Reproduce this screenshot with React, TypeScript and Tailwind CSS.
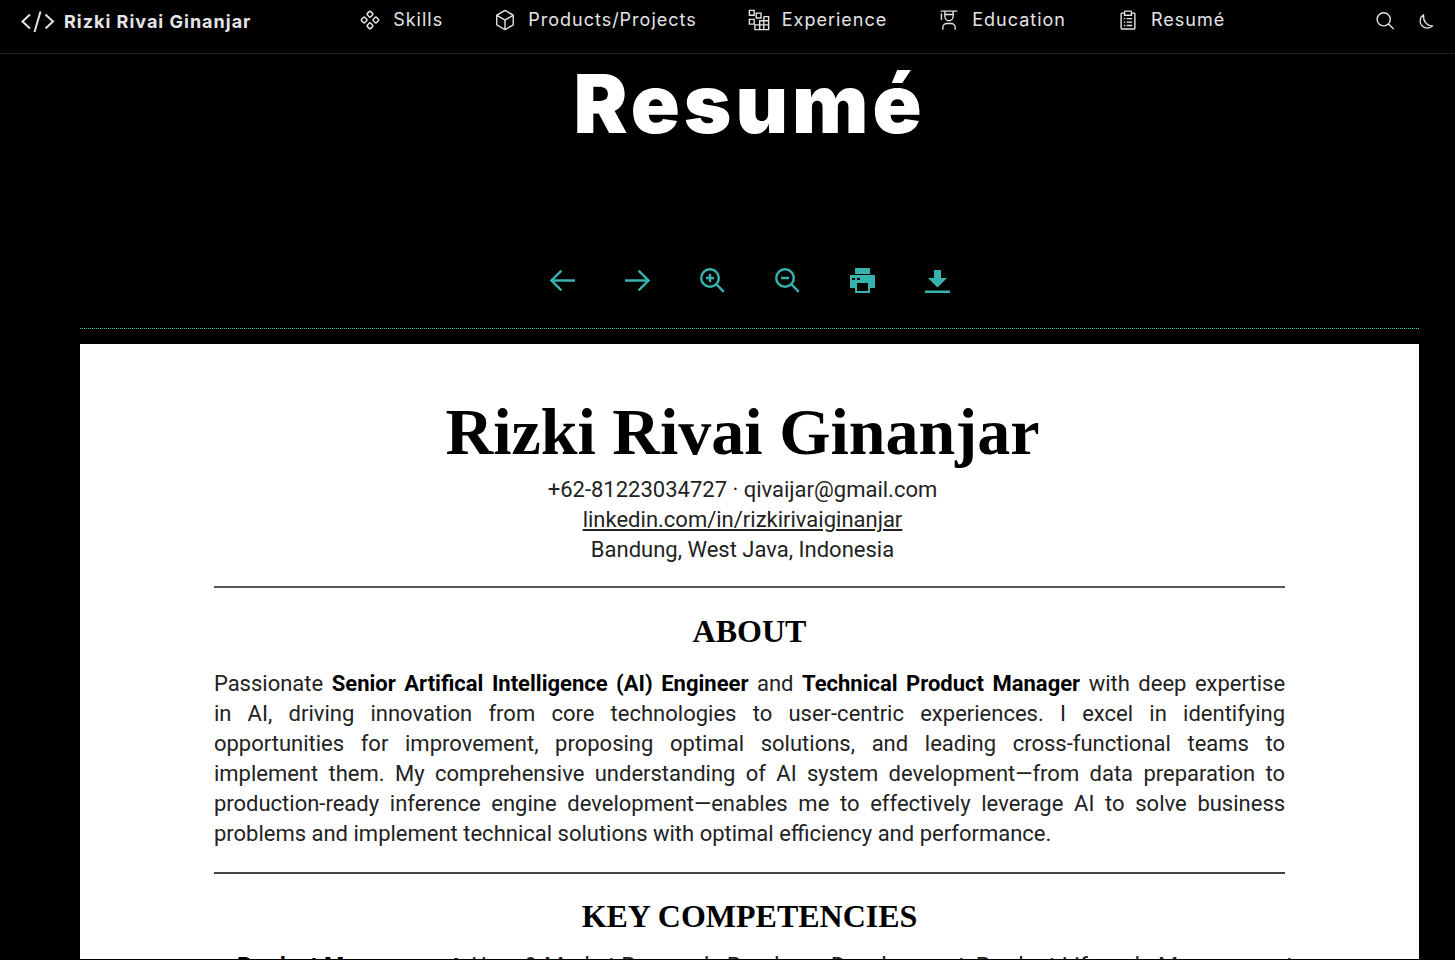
import { ReactNode } from "react";

function Glyph({ children, size = "size-[22px]", box = "0 0 32 32" }: { children: ReactNode; size?: string; box?: string }) {
  return (
    <svg viewBox={box} className={`${size} shrink-0`} fill="currentColor" aria-hidden="true">
      {children}
    </svg>
  );
}

const SkillsIcon = () => (
  <Glyph>
    <g fill="none" stroke="currentColor" strokeWidth="2.2">
      <rect x="12.6" y="4.1" width="6.8" height="6.8" rx="1.6" transform="rotate(45 16 7.5)" />
      <rect x="4.1" y="12.6" width="6.8" height="6.8" rx="1.6" transform="rotate(45 7.5 16)" />
      <rect x="21.1" y="12.6" width="6.8" height="6.8" rx="1.6" transform="rotate(45 24.5 16)" />
      <rect x="12.6" y="21.1" width="6.8" height="6.8" rx="1.6" transform="rotate(45 16 24.5)" />
    </g>
  </Glyph>
);

const BoxIcon = () => (
  <Glyph>
    <path d="m28.504 8.136-12-7a1 1 0 0 0-1.008 0l-12 7A1 1 0 0 0 3 9v14a1 1 0 0 0 .496.864l12 7a1 1 0 0 0 1.008 0l12-7A1 1 0 0 0 29 23V9a1 1 0 0 0-.496-.864ZM16 3.158 26.016 9 16 14.842 5.984 9ZM5 10.74l10 5.833v11.684l-10-5.83Zm12 17.516V16.574l10-5.833v11.685Z" />
  </Glyph>
);

const ExperienceIcon = () => (
  <Glyph>
    <g fill="none" stroke="currentColor" strokeWidth="2">
      <path d="M2 2h7v7H2ZM12 6h7v7h-7ZM2 15h7v7H2Z" />
      <path d="M23 11h7v19H10v-7h20M23 11v19M30 17H17v13" />
    </g>
  </Glyph>
);

const EducationIcon = () => (
  <Glyph>
    <path d="M26 30h-2v-3a5 5 0 0 0-5-5h-6a5 5 0 0 0-5 5v3H6v-3a7 7 0 0 1 7-7h6a7 7 0 0 1 7 7ZM5 6a1 1 0 0 0-1 1v9h2V7a1 1 0 0 0-1-1Z" />
    <path d="M4 2v2h5v7a7 7 0 0 0 14 0V4h5V2Zm7 2h10v3H11Zm5 12a5 5 0 0 1-5-5V9h10v2a5 5 0 0 1-5 5Z" />
  </Glyph>
);

const ResumeIcon = () => (
  <Glyph>
    <path d="M14 13h8v2h-8Zm0 5h8v2h-8Zm0 5h8v2h-8Zm-4-10h2v2h-2Zm0 5h2v2h-2Zm0 5h2v2h-2Z" />
    <path d="M25 5h-3V4a2 2 0 0 0-2-2h-8a2 2 0 0 0-2 2v1H7a2 2 0 0 0-2 2v21a2 2 0 0 0 2 2h18a2 2 0 0 0 2-2V7a2 2 0 0 0-2-2ZM12 4h8v4h-8Zm13 24H7V7h3v3h12V7h3Z" />
  </Glyph>
);

const links = [
  { label: "Skills", Icon: SkillsIcon },
  { label: "Products/Projects", Icon: BoxIcon },
  { label: "Experience", Icon: ExperienceIcon },
  { label: "Education", Icon: EducationIcon },
  { label: "Resumé", Icon: ResumeIcon },
];

const line = { fill: "none", stroke: "currentColor", strokeWidth: 2.4 };

const tools: { label: string; art: ReactNode }[] = [
  { label: "Previous page", art: <path d="M11.4 2.600 1.500 12.5l9.900 9.900M1 12.5H25" {...line} /> },
  { label: "Next page", art: <path d="M13.6 2.600 23.500 12.5l-9.900 9.900M24 12.5H0" {...line} /> },
  { label: "Zoom in", art: <path d="M10 1.2a8.8 8.8 0 1 0 0 17.6 8.8 8.8 0 0 0 0-17.6ZM16.200 16.200 23.800 23.800M10 6v8M6 10h8" {...line} /> },
  { label: "Zoom out", art: <path d="M10 1.2a8.8 8.8 0 1 0 0 17.6 8.8 8.8 0 0 0 0-17.6ZM16.200 16.200 23.800 23.800M6 10h8" {...line} /> },
  { label: "Print", art: <path fillRule="evenodd" d="M5 0h15v6H5ZM0 7h25v13h-5v5H5v-5H0ZM2 10v2h3v-2Zm5 0v2h3v-2ZM7 15v8h11v-8Z" /> },
  { label: "Download", art: <path d="M9 2h7v8h6l-9.500 9.500L3 10h6ZM0 22.500h25V25H0Z" /> },
];

const aboutLines: ReactNode[] = [
  <>
    Passionate <b className="text-black">Senior Artifical Intelligence (AI) Engineer</b> and{" "}
    <b className="text-black">Technical Product Manager</b> with deep expertise
  </>,
  "in AI, driving innovation from core technologies to user-centric experiences. I excel in identifying",
  "opportunities for improvement, proposing optimal solutions, and leading cross-functional teams to",
  "implement them. My comprehensive understanding of AI system development—from data preparation to",
  "production-ready inference engine development—enables me to effectively leverage AI to solve business",
];

const heading = "text-center font-['Liberation_Serif',serif] text-[32px] leading-10 font-bold text-black";

export default function App() {
  return (
    <div className="h-screen overflow-hidden bg-black pb-px font-['Inter',sans-serif] text-[#e4e4e7]">
      <div className="flex h-full flex-col overflow-hidden">
        <header className="flex h-[54px] shrink-0 items-start border-b border-[#222] px-5">
          <a href="#home" className="flex items-center gap-2 pt-1 text-[18px] leading-[34px] font-bold tracking-[1px]">
            <Glyph size="size-9" box="0 0 36 36">
              <path
                d="M10 10.500 2.500 17.500l7.500 7M20.500 7.500 14.500 28M25.500 10.500l7.500 7-7.500 7"
                fill="none"
                stroke="currentColor"
                strokeWidth="2"
              />
            </Glyph>
            Rizki Rivai Ginanjar
          </a>
          <nav className="flex flex-1 justify-center gap-[51px] pt-1 pr-[42px]" aria-label="Main">
            {links.map(({ label, Icon }) => (
              <a key={label} href={`#${label}`} className="flex items-center gap-3 text-[18px] leading-8 tracking-[1px]">
                <Icon />
                {label}
              </a>
            ))}
          </nav>
          <div className="flex items-center justify-end gap-5 pt-2.5">
            <button aria-label="Search">
              <Glyph size="size-5" box="0 0 20 20">
                <path
                  d="M8.700 2.700a6.600 6.600 0 1 0 0 13.200 6.600 6.600 0 0 0 0-13.200ZM13.500 14 18.700 19"
                  fill="none"
                  stroke="currentColor"
                  strokeWidth="1.400"
                />
              </Glyph>
            </button>
            <button aria-label="Toggle dark mode">
              <Glyph size="size-5" box="0 0 20 20">
                <path
                  d="M8.500 4.700A7.300 7.300 0 1 0 17.700 15.900C12 16 8 11.500 8.500 4.700Z"
                  fill="none"
                  stroke="currentColor"
                  strokeWidth="1.300"
                  strokeLinejoin="round"
                />
              </Glyph>
            </button>
          </div>
        </header>
        <main className="min-h-0 flex-1 pr-9 pl-20">
          <h1 className="h-[178px] text-center text-[81px] leading-[100px] font-black tracking-[4px] text-white">Resumé</h1>
          <div className="flex justify-center gap-[50px] border-b border-dotted border-[#4fd1c5] pt-9 pb-[35px] text-[#38b2ac]">
            {tools.map(({ label, art }) => (
              <button key={label} aria-label={label}>
                <Glyph size="size-[25px]" box="0 0 25 25">{art}</Glyph>
              </button>
            ))}
          </div>
          <article className="mt-[15px] bg-white px-[10%] pt-11 font-['Roboto',sans-serif] text-[22px] leading-[30px] text-[#222]">
            <div className="pr-[14px] text-center">
              <h2 className="font-['Liberation_Serif',serif] text-[66px] leading-[87px] font-bold text-black">Rizki Rivai Ginanjar</h2>
              <address className="not-italic">
                <p>+62-81223034727 · qivaijar@gmail.com</p>
                <p>
                  <a href="#linkedin" className="underline">linkedin.com/in/rizkirivaiginanjar</a>
                </p>
                <p>Bandung, West Java, Indonesia</p>
              </address>
            </div>
            <hr className="mt-[21px] border-t-2 border-[#555]" />
            <h3 className={`mt-[23px] ${heading}`}>ABOUT</h3>
            <p className="mt-[18px]">
              {aboutLines.map((text, i) => (
                <span key={i} className="block text-justify [text-align-last:justify]">
                  {text}{" "}
                </span>
              ))}
              <span className="block">problems and implement technical solutions with optimal efficiency and performance.</span>
            </p>
            <hr className="mt-[23px] border-t-2 border-[#444]" />
            <h3 className={`mt-[22px] ${heading}`}>KEY COMPETENCIES</h3>
            <p className="mt-4 ml-[23px] text-[23px] whitespace-nowrap">
              <b className="text-black">Product Management</b>: User &amp; Market Research, Roadmap Development, Product Lifecycle Management
            </p>
          </article>
        </main>
      </div>
    </div>
  );
}
